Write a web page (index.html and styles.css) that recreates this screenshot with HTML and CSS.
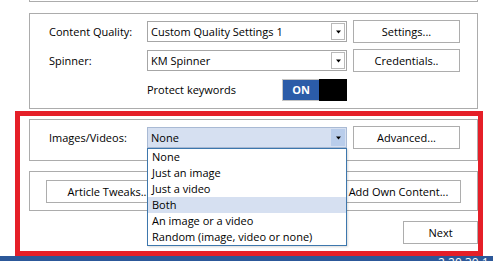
FILE: index.html
```html
<!DOCTYPE html>
<html>
<head>
<meta charset="utf-8">
<link rel="stylesheet" href="styles.css">
</head>
<body>
<div class="top-panel"></div>
<div class="group group-main">
  <div class="form-grid">
    <span class="label">Content Quality:</span>
    <div class="combo"><span class="combo-text">Custom Quality Settings 1</span><span class="combo-btn"><svg width="7" height="4" viewBox="0 0 7 4"><path d="M1 0.5h5L3.5 3.5z" fill="#000"/></svg></span></div>
    <button class="btn">Settings...</button>
    <span class="label">Spinner:</span>
    <div class="combo"><span class="combo-text">KM Spinner</span><span class="combo-btn"><svg width="7" height="4" viewBox="0 0 7 4"><path d="M1 0.5h5L3.5 3.5z" fill="#000"/></svg></span></div>
    <button class="btn">Credentials..</button>
    <div class="protect-row">
      <span class="protect-text">Protect keywords</span>
      <div class="toggle"><span class="toggle-on">ON</span><span class="toggle-off"></span></div>
    </div>
  </div>
</div>
<div class="annot">
  <div class="group group-media">
    <div class="form-grid">
      <span class="label">Images/Videos:</span>
      <div class="combo combo-open"><span class="combo-text">None</span><span class="combo-btn"><svg width="7" height="4" viewBox="0 0 7 4"><path d="M1 0.5h5L3.5 3.5z" fill="#000"/></svg></span>
        <ul class="dropdown">
          <li>None</li>
          <li>Just an image</li>
          <li>Just a video</li>
          <li class="hl">Both</li>
          <li>An image or a video</li>
          <li>Random (image, video or none)</li>
        </ul>
      </div>
      <button class="btn">Advanced...</button>
    </div>
  </div>
  <div class="group group-tweaks">
    <button class="btn btn-wide">Article Tweaks...</button>
    <button class="btn btn-wide">Add Own Content...</button>
  </div>
  <div class="next-row"><button class="btn btn-next">Next</button></div>
</div>
<div class="statusbar"><span class="version">2.20.30.1</span></div>
</body>
</html>
```
FILE: styles.css
```css
* { box-sizing: border-box; }
html, body { margin: 0; padding: 0; }
body {
  width: 493px;
  height: 261px;
  overflow: hidden;
  background: #fff;
  font-family: "Open Sans", "Noto Sans", sans-serif;
  font-size: 11px;
  color: #000;
}
.top-panel {
  margin-left: 29px;
  width: 449px;
  height: 2px;
  border: 1px solid #acacac;
  border-top: none;
}
.group {
  margin-left: 29px;
  width: 449px;
  border: 1px solid #acacac;
}
.group-main {
  margin-top: 11px;
  height: 96px;
  padding: 6px 0 0 19px;
}
.form-grid {
  display: grid;
  grid-template-columns: 92px 200px 107px;
  column-gap: 6px;
  row-gap: 6px;
  grid-auto-rows: 23px;
  align-items: center;
}
.label { white-space: nowrap; }
.combo {
  position: relative;
  height: 21px;
  border: 1px solid #a6a6a6;
  background: #fff;
  display: flex;
  align-items: center;
  padding-left: 3px;
}
.combo-text { flex: 1; white-space: nowrap; }
.combo-btn {
  width: 14px;
  height: 17px;
  margin-right: 1px;
  border: 1px solid #b9b9b9;
  display: flex;
  align-items: center;
  justify-content: center;
}
.btn {
  height: 23px;
  border: 1px solid #adadad;
  background: #fff;
  font-family: inherit;
  font-size: 11px;
  color: #000;
  padding: 0;
}
.protect-row {
  grid-column: 2;
  height: 22px;
  display: flex;
  align-items: center;
  justify-content: space-between;
}
.toggle {
  width: 65px;
  height: 22px;
  display: flex;
}
.toggle-on {
  width: 37px;
  background: #2b5ca8;
  border: 1px solid #c4c4c4;
  border-right: none;
  color: #fff;
  font-weight: 700;
  display: flex;
  align-items: center;
  justify-content: center;
}
.toggle-off {
  flex: 1;
  background: #000;
}
.annot {
  margin-top: 2px;
  margin-left: 15px;
  width: 468px;
  border: 5px solid #e51f28;
  padding: 3px 0 7px 9px;
}
.annot .group { margin-left: 0; }
.group-media {
  height: 42px;
  padding: 6px 0 0 19px;
}
.combo-open {
  background: #d6e0f1;
  border-color: #a9bad4;
}
.combo-open .combo-btn {
  background: #b9cdeb;
  border-color: #b9cdeb;
}
.dropdown {
  position: absolute;
  left: -1px;
  top: 20px;
  width: 200px;
  margin: 0;
  padding: 0;
  list-style: none;
  background: #fff;
  border: 1px solid #3d77ad;
  z-index: 5;
  box-shadow: 1px 1px 2px rgba(0,0,0,0.15);
}
.dropdown li {
  height: 16px;
  line-height: 16px;
  padding-left: 4px;
  white-space: nowrap;
}
.dropdown li.hl { background: #d6e0f1; }
.group-tweaks {
  margin-top: 10px;
  height: 40px;
  padding: 0 16px;
  display: flex;
  align-items: center;
  justify-content: space-between;
}
.btn-wide { width: 125px; }
.next-row {
  margin-top: 10px;
  width: 449px;
  display: flex;
  justify-content: flex-end;
}
.btn-next { width: 75px; }
.statusbar {
  height: 10px;
  background: #2c5899;
  overflow: hidden;
  padding-left: 438px;
}
.version {
  display: block;
  color: #fff;
  font-size: 12px;
  line-height: 12px;
  margin-top: 1px;
  white-space: nowrap;
}
```
